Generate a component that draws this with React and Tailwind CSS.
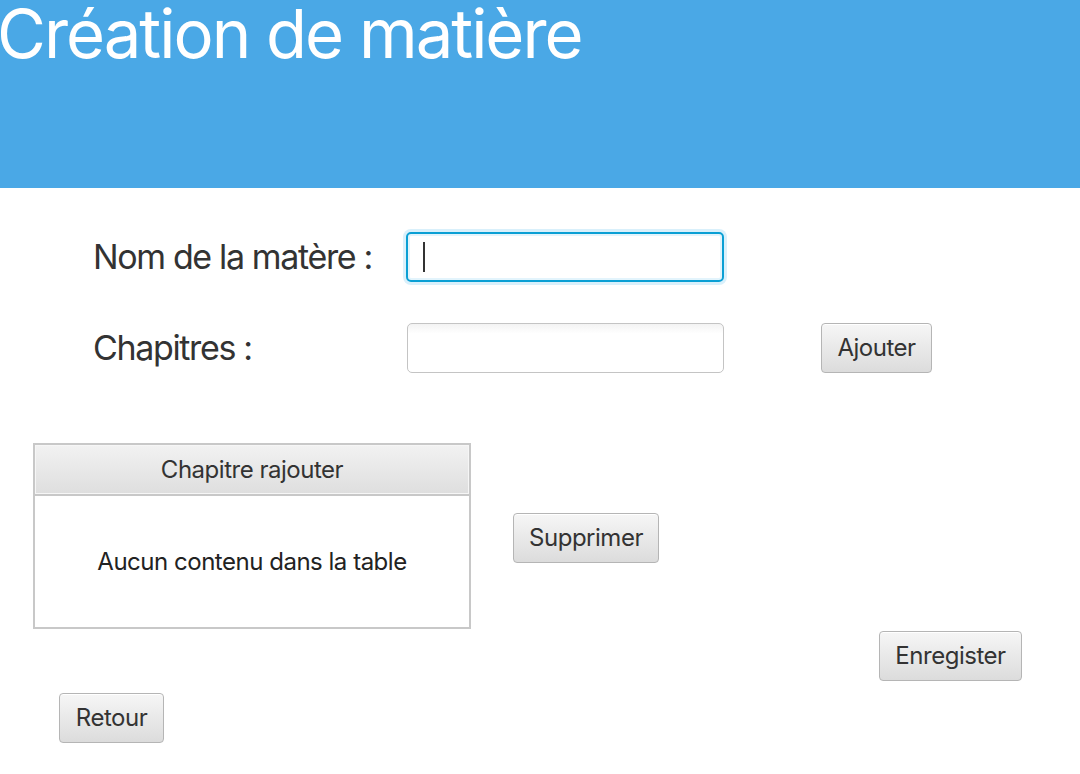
const font = { fontFamily: 'Inter, "Noto Sans", sans-serif' }

function FxButton({ children, className = '' }) {
  return (
    <div
      className={`h-[50px] flex items-center justify-center rounded-[4px] border border-[#b5b5b5] bg-gradient-to-b from-[#f6f6f6] to-[#dcdcdc] shadow-[inset_0_1px_0_#ffffff] text-[24px] text-[#333333] tracking-[-0.02em] whitespace-nowrap ${className}`}
    >
      {children}
    </div>
  )
}

export default function App() {
  return (
    <div className="w-[1080px] h-[774px] bg-white overflow-hidden" style={font}>
      {/* header */}
      <div className="h-[188px] bg-[#4aa8e6] overflow-hidden">
        <h1 className="text-white text-[67px] leading-[67px] tracking-[-0.03em] -ml-[3px] font-normal whitespace-nowrap">
          Création de matière
        </h1>
      </div>

      {/* form */}
      <div className="flex items-center mt-[43px]">
        <div className="w-[406px] pl-[93px] text-[34px] text-[#333333] tracking-[-0.04em] whitespace-nowrap">Nom de la matère :</div>
        <div className="w-[318px] h-[50px] rounded-[5px] border-2 border-[#0a9fd4] shadow-[0_0_0_3px_#d9f0fb,inset_0_0_0_2px_#e3f4fc] bg-white flex items-center pl-[15px]">
          <span className="w-[2px] h-[30px] bg-[#333333]" />
        </div>
      </div>

      <div className="flex items-center mt-[40px]">
        <div className="w-[407px] pl-[93px] text-[34px] text-[#333333] tracking-[-0.04em] whitespace-nowrap">Chapitres :</div>
        <div className="w-[317px] h-[50px] rounded-[5px] border border-[#c4c4c4] bg-gradient-to-b from-[#f3f3f3] to-white to-[20%]" />
        <FxButton className="ml-[97px] w-[111px]">Ajouter</FxButton>
      </div>

      <div className="flex items-start mt-[70px] pl-[33px]">
        <div className="w-[438px] h-[186px] border-2 border-[#c8c8c8] flex flex-col">
          <div className="h-[51px] border-b-2 border-[#c8c8c8] bg-gradient-to-b from-[#f2f2f2] to-[#dedede] shadow-[inset_0_0_0_1px_#f6f6f6] flex items-center justify-center text-[24px] text-[#333333] tracking-[-0.02em]">
            Chapitre rajouter
          </div>
          <div className="flex-1 flex items-center justify-center text-[24px] text-[#222222] tracking-[-0.02em]">
            Aucun contenu dans la table
          </div>
        </div>
        <FxButton className="ml-[42px] mt-[70px] w-[146px]">Supprimer</FxButton>
      </div>

      <div className="flex mt-[2px] pl-[879px]">
        <FxButton className="w-[143px]">Enregister</FxButton>
      </div>

      <div className="flex mt-[12px] pl-[59px]">
        <FxButton className="w-[105px]">Retour</FxButton>
      </div>
    </div>
  )
}
